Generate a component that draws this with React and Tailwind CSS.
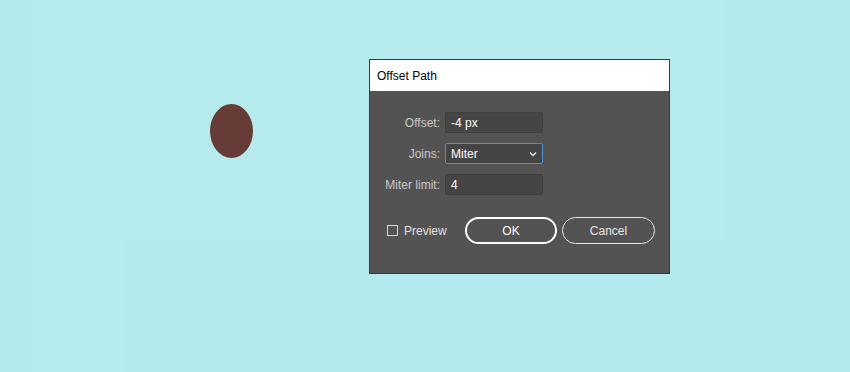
import React from 'react';

function Field({ label, children }) {
  return (
    <div className="flex items-center h-[21px]">
      <span className="w-[72px] text-right pr-[5px] text-[12px] text-[#c9c9c9]">{label}</span>
      {children}
    </div>
  );
}

export default function App() {
  return (
    <div
      className="relative w-[850px] h-[372px] bg-[#b4eaed] overflow-hidden"
      style={{ fontFamily: '"Liberation Sans", Arial, sans-serif' }}
    >
      <div className="absolute left-[32px] top-0 w-[693px] h-[240px] bg-[#b6ebed]" />
      <div className="absolute left-[32px] top-[240px] w-[93px] h-[132px] bg-[#b6ebed]" />

      <div className="absolute left-[210px] top-[104px] w-[43px] h-[54px] rounded-[50%] bg-[#683c36]" />

      <div className="absolute left-[369px] top-[59px] w-[301px] h-[215px] border border-[#3a3a3a] bg-[#535353] flex flex-col">
        <div className="h-[31px] bg-white flex items-center px-[7px] text-[12px] text-black">Offset Path</div>
        <div className="flex flex-col pl-[3px] pt-[21px] gap-[10px]">
          <Field label="Offset:">
            <div className="w-[98px] h-[21px] bg-[#454545] border border-[#3f3f3f] rounded-[2px] flex items-center px-[5px] text-[12px] text-white">-4 px</div>
          </Field>
          <Field label="Joins:">
            <div className="w-[98px] h-[21px] bg-[#454545] border border-[#4c8fd9] rounded-[2px] flex items-center justify-between px-[5px] text-[12px] text-white">
              <span>Miter</span>
              <svg width="8" height="6" viewBox="0 0 8 6" fill="none">
                <path d="M1 1.5 L4 4.5 L7 1.5" stroke="#e6e6e6" strokeWidth="1.4" />
              </svg>
            </div>
          </Field>
          <Field label="Miter limit:">
            <div className="w-[98px] h-[21px] bg-[#454545] border border-[#3f3f3f] rounded-[2px] flex items-center px-[5px] text-[12px] text-white">4</div>
          </Field>
        </div>
        <div className="flex items-center pl-[17px] pt-[22px]">
          <div className="flex items-center gap-[6px] w-[78px]">
            <div className="w-[11px] h-[11px] border border-[#d6d6d6]" />
            <span className="text-[12px] text-[#e0e0e0]">Preview</span>
          </div>
          <button className="w-[92px] h-[27px] rounded-full border-2 border-white text-[12px] text-white">OK</button>
          <button className="ml-[5px] w-[93px] h-[27px] rounded-full border border-[#e8e8e8] text-[12px] text-[#e8e8e8]">Cancel</button>
        </div>
      </div>
    </div>
  );
}
